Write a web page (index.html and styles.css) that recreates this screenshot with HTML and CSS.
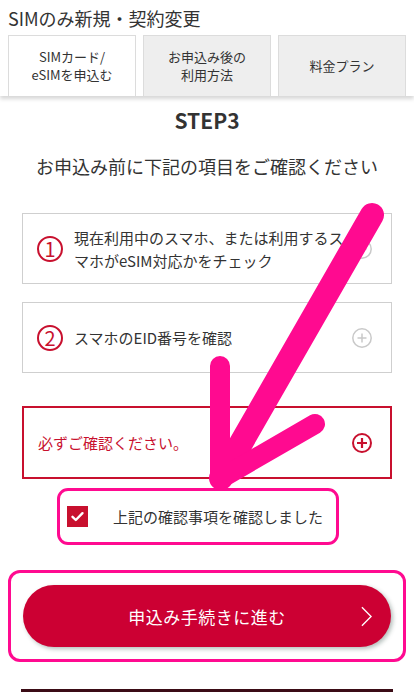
FILE: index.html
```html
<!DOCTYPE html>
<html lang="ja">
<head>
<meta charset="utf-8">
<title>SIMのみ新規・契約変更</title>
<link rel="stylesheet" href="styles.css">
</head>
<body>
<header class="head">
  <h1 class="title">SIMのみ新規・契約変更</h1>
  <nav class="tabs">
    <div class="tab active">SIMカード/<br>eSIMを申込む</div>
    <div class="tab">お申込み後の<br>利用方法</div>
    <div class="tab">料金プラン</div>
  </nav>
</header>
<main class="main">
  <h2 class="step">STEP3</h2>
  <p class="lead">お申込み前に下記の項目をご確認ください</p>
  <div class="cards">
    <div class="card">
      <span class="num">1</span>
      <span class="card-text">現在利用中のスマホ、または利用するスマホがeSIM対応かをチェック</span>
      <svg class="plus" viewBox="0 0 20 20"><circle cx="10" cy="10" r="9.2" fill="none" stroke="#c9c9c9" stroke-width="1.5"/><path d="M10 5.5v9M5.5 10h9" stroke="#c9c9c9" stroke-width="1.5"/></svg>
    </div>
    <div class="card">
      <span class="num">2</span>
      <span class="card-text">スマホのEID番号を確認</span>
      <svg class="plus" viewBox="0 0 20 20"><circle cx="10" cy="10" r="9.2" fill="none" stroke="#c9c9c9" stroke-width="1.5"/><path d="M10 5.5v9M5.5 10h9" stroke="#c9c9c9" stroke-width="1.5"/></svg>
    </div>
  </div>
  <div class="notice">
    <span class="notice-text">必ずご確認ください。</span>
    <svg class="plus" viewBox="0 0 20 20"><circle cx="10" cy="10" r="9" fill="none" stroke="#c8102e" stroke-width="2"/><path d="M10 5v10M5 10h10" stroke="#c8102e" stroke-width="2.2"/></svg>
  </div>
  <div class="check-wrap">
    <span class="checkbox"><svg viewBox="0 0 21 21"><path d="M5.5 10.8l3.3 3.2 6.7-6.8" fill="none" stroke="#fff" stroke-width="2.4" stroke-linecap="round" stroke-linejoin="round"/></svg></span>
    <span class="check-label">上記の確認事項を確認しました</span>
  </div>
  <div class="btn-wrap">
    <div class="btn">
      <span></span>
      <span class="btn-text">申込み手続きに進む</span>
      <svg class="chev" viewBox="0 0 12 22"><path d="M1 1l10 10L1 21" fill="none" stroke="#fff" stroke-width="1.5"/></svg>
    </div>
  </div>
  <div class="bottom-bar"></div>
</main>
<svg class="arrow" viewBox="0 0 414 692" width="414" height="692">
  <g fill="none" stroke="#ff0a90" stroke-linecap="round" stroke-linejoin="round">
    <path d="M372 215 L221 478" stroke-width="24"/>
    <path d="M220 366 L220 479 L315 424" stroke-width="20"/>
  </g>
</svg>
</body>
</html>
```
FILE: styles.css
```css
* { box-sizing: border-box; }
html, body { margin: 0; padding: 0; }
body {
  position: relative;
  width: 414px;
  height: 692px;
  overflow: hidden;
  background: #fff;
  color: #333;
  font-family: "Noto Sans CJK JP", "Noto Sans", sans-serif;
}
.head {
  padding: 7px 8px 0;
  background: #fff;
  box-shadow: 0 3px 4px rgba(0, 0, 0, 0.16);
  position: relative;
}
.title {
  margin: 0 0 6px;
  font-size: 18px;
  line-height: 22px;
  font-weight: normal;
  color: #333;
}
.tabs {
  display: grid;
  grid-template-columns: repeat(3, 1fr);
  gap: 7px;
  height: 61px;
}
.tab {
  border: 1px solid #dcdcdc;
  border-bottom: none;
  background: #eee;
  display: flex;
  align-items: center;
  justify-content: center;
  text-align: center;
  font-size: 13px;
  line-height: 18px;
  color: #333;
}
.tab.active { background: #fff; }
.main { padding: 0; }
.step {
  margin: 12px 0 0;
  text-align: center;
  font-size: 21px;
  line-height: 25px;
  font-weight: bold;
  color: #333;
}
.lead {
  margin: 20px 0 0;
  text-align: center;
  font-size: 18px;
  line-height: 26px;
}
.cards {
  margin: 34px 22px 0;
  display: flex;
  flex-direction: column;
  gap: 18px;
}
.card {
  min-height: 71px;
  border: 1px solid #cfcfcf;
  display: flex;
  align-items: center;
  padding: 0 19px 0 14px;
  background: #fff;
}
.num {
  flex: none;
  width: 26px;
  height: 26px;
  border: 2px solid #c8102e;
  border-radius: 50%;
  color: #c8102e;
  font-size: 20px;
  line-height: 21px;
  text-align: center;
  margin-right: 11px;
}
.card-text {
  flex: 1;
  font-size: 15px;
  line-height: 23px;
  margin-right: 4px;
}
.plus {
  flex: none;
  width: 20px;
  height: 20px;
}
.notice {
  margin: 33px 22px 0;
  height: 73px;
  border: 2px solid #c8102e;
  display: flex;
  align-items: center;
  justify-content: space-between;
  padding: 0 18px 0 14px;
}
.notice-text {
  color: #c8102e;
  font-size: 15px;
}
.check-wrap {
  margin: 9px 0 0 57px;
  width: 282px;
  height: 57px;
  border: 3px solid #ff0a90;
  border-radius: 11px;
  display: flex;
  align-items: center;
  padding-left: 7px;
}
.checkbox {
  width: 21px;
  height: 21px;
  background: #c8102e;
  display: block;
}
.checkbox svg { display: block; width: 21px; height: 21px; }
.check-label {
  margin-left: 25px;
  font-size: 15px;
  color: #333;
}
.btn-wrap {
  margin: 25px 8px 0;
  border: 3px solid #ff0a90;
  border-radius: 12px;
  padding: 12px;
}
.btn {
  height: 62px;
  border-radius: 31px;
  background: #cc0033;
  color: #fff;
  display: grid;
  grid-template-columns: 1fr auto 1fr;
  align-items: center;
  box-shadow: 2px 2px 4px rgba(40, 70, 60, 0.35);
}
.btn-text {
  font-size: 17px;
  letter-spacing: 0.5px;
}
.chev {
  justify-self: end;
  width: 11px;
  height: 21px;
  margin-right: 19px;
}
.bottom-bar {
  margin: 27px 21px 0;
  height: 10px;
  background: #3b0c16;
}
.arrow {
  position: absolute;
  top: 0;
  left: 0;
  pointer-events: none;
}
```
